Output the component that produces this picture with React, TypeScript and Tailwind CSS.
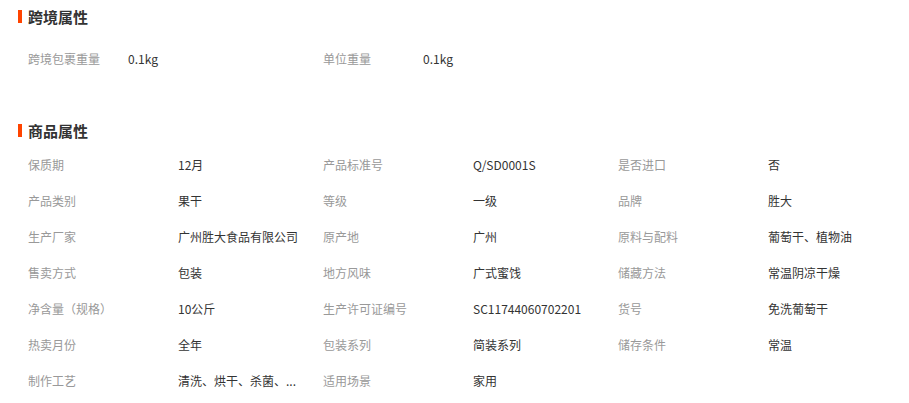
import React from 'react';

type Attr = [string, string];

const crossBorder: Attr[] = [
    ['跨境包裹重量', '0.1kg'],
    ['单位重量', '0.1kg'],
];

const goods: Attr[] = [
    ['保质期', '12月'],
    ['产品标准号', 'Q/SD0001S'],
    ['是否进口', '否'],
    ['产品类别', '果干'],
    ['等级', '一级'],
    ['品牌', '胜大'],
    ['生产厂家', '广州胜大食品有限公司'],
    ['原产地', '广州'],
    ['原料与配料', '葡萄干、植物油'],
    ['售卖方式', '包装'],
    ['地方风味', '广式蜜饯'],
    ['储藏方法', '常温阴凉干燥'],
    ['净含量（规格）', '10公斤'],
    ['生产许可证编号', 'SC11744060702201'],
    ['货号', '免洗葡萄干'],
    ['热卖月份', '全年'],
    ['包装系列', '简装系列'],
    ['储存条件', '常温'],
    ['制作工艺', '清洗、烘干、杀菌、...'],
    ['适用场景', '家用'],
];

const SectionTitle: React.FC<{ title: string }> = ({ title }) => (
    <div className='flex items-center h-[32px]'>
        <span className='w-[4px] h-[13px] bg-[#ff4400]' />
        <h3 className='ml-[6px] text-[15px] font-bold text-[#333] leading-none'>{title}</h3>
    </div>
);

const App: React.FC = () => {
    return (
        <div className="w-[909px] h-[403px] bg-white pl-[18px] overflow-hidden text-[12px] font-['Noto_Sans_CJK_SC','Noto_Sans',sans-serif]">
            <SectionTitle title='跨境属性' />
            <div className='mt-[9px] pl-[10px] grid grid-cols-[100px_195px_100px_195px]'>
                {crossBorder.map(([label, value]) => (
                    <React.Fragment key={label}>
                        <div className='h-[36px] flex items-center text-[#999]'>{label}</div>
                        <div className='h-[36px] flex items-center text-[#333]'>{value}</div>
                    </React.Fragment>
                ))}
            </div>

            <div className='mt-[37px]'>
                <SectionTitle title='商品属性' />
            </div>
            <div className='mt-[1px] pl-[10px] grid grid-cols-[150px_145px_150px_145px_150px_140px]'>
                {goods.map(([label, value]) => (
                    <React.Fragment key={label}>
                        <div className='h-[36px] flex items-center text-[#999] whitespace-nowrap'>{label}</div>
                        <div className='h-[36px] flex items-center text-[#333] whitespace-nowrap'>{value}</div>
                    </React.Fragment>
                ))}
            </div>
        </div>
    );
};

export default App;
